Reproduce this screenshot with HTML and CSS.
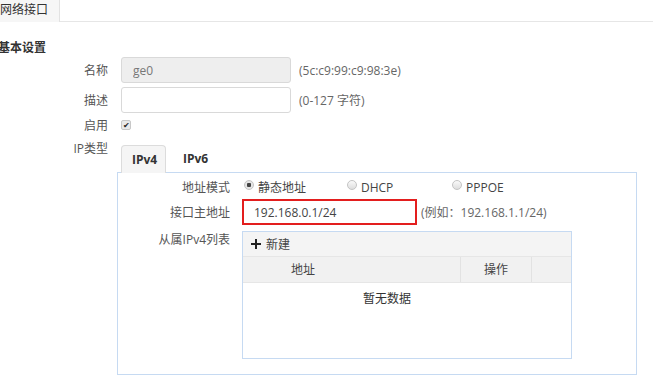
FILE: index.html
```html
<!DOCTYPE html>
<html lang="zh-CN">
	<head>
		<meta charset="utf-8">
		<meta name="viewport" content="width=device-width, initial-scale=1.0">
		<title>网络接口</title>
		<link rel="stylesheet" href="styles.css">
	</head>
	<body>
		<div class="top-tabs">
			<div class="top-tab">网络接口</div>
		</div>
		<h2 class="section-title">基本设置</h2>
		<div class="form">
			<div class="row row-input">
				<label class="label">名称</label>
				<input type="text" class="field field-disabled" value="ge0" readonly>
				<span class="hint">(5c:c9:99:c9:98:3e)</span>
			</div>
			<div class="row row-input">
				<label class="label">描述</label>
				<input type="text" class="field">
				<span class="hint">(0-127 字符)</span>
			</div>
			<div class="row row-check">
				<label class="label">启用</label>
				<span class="check">&#10004;</span>
			</div>
			<div class="row row-type">
				<label class="label label-top">IP类型</label>
				<div class="type-wrap">
					<div class="ip-tabs">
						<div class="ip-tab active">IPv4</div>
						<div class="ip-tab">IPv6</div>
					</div>
					<div class="ip-panel">
						<div class="inner-row inner-mode">
							<label class="inner-label">地址模式</label>
							<div class="radios">
								<span class="radio-item"><span class="radio checked"></span>静态地址</span>
								<span class="radio-item"><span class="radio"></span>DHCP</span>
								<span class="radio-item"><span class="radio"></span>PPPOE</span>
							</div>
						</div>
						<div class="inner-row inner-ip">
							<label class="inner-label">接口主地址</label>
							<input type="text" class="field field-error" value="192.168.0.1/24">
							<span class="hint">(例如：192.168.1.1/24)</span>
						</div>
						<div class="inner-row inner-list">
							<label class="inner-label">从属IPv4列表</label>
							<div class="grid-box">
								<div class="toolbar">
									<svg class="plus" width="10" height="10" viewBox="0 0 10 10"><path d="M4 0h2v4h4v2H6v4H4V6H0V4h4z" fill="#222"/></svg>
									<span>新建</span>
								</div>
								<div class="grid-head">
									<div class="col col-addr">地址</div>
									<div class="col col-op">操作</div>
									<div class="col col-pad"></div>
								</div>
								<div class="grid-empty">暂无数据</div>
							</div>
						</div>
					</div>
				</div>
			</div>
		</div>
	</body>
</html>
```

FILE: styles.css
```css
body {
	margin: 0;
	font-family: 'Open Sans', 'Noto Sans CJK SC', sans-serif;
	font-size: 12px;
	color: #444;
	background-color: #fff;
}
.top-tabs {
	display: flex;
	height: 21px;
	border-bottom: 1px solid #e6e6e6;
}
.top-tab {
	width: 59px;
	height: 22px;
	line-height: 20px;
	background-color: #f6f6f6;
	border-right: 1px solid #e2e2e2;
	color: #333;
	font-size: 12px;
}
.section-title {
	margin: 18px 0 1px -2px;
	height: 16px;
	line-height: 16px;
	font-size: 12px;
	font-weight: bold;
	color: #333;
}
.row {
	display: flex;
	align-items: center;
}
.label {
	width: 108px;
	padding-right: 13px;
	text-align: right;
	color: #555;
	flex-shrink: 0;
}
.row-input {
	height: 26px;
	margin-bottom: 4px;
}
.field {
	box-sizing: border-box;
	width: 170px;
	height: 26px;
	padding: 0 11px;
	border: 1px solid #d9d9d9;
	border-radius: 3px;
	font-family: 'Open Sans', 'Noto Sans CJK SC', sans-serif;
	font-size: 12px;
	color: #444;
	background-color: #fff;
	outline: none;
}
.field-disabled {
	background-color: #eeeeee;
	color: #777;
}
.hint {
	margin-left: 8px;
	color: #666;
}
.row-check {
	height: 16px;
}
.check {
	box-sizing: border-box;
	width: 10px;
	height: 10px;
	border: 1px solid #c8c8c8;
	border-radius: 2px;
	background-color: #e9e9e9;
	font-size: 8px;
	line-height: 8px;
	text-align: center;
	color: #222;
}
.row-type {
	align-items: flex-start;
	margin-top: 12px;
}
.label-top {
	line-height: 16px;
	margin-top: -4px;
}
.row-type > .label {
	padding-right: 9px;
}
.type-wrap {
	width: 520px;
}
.ip-tabs {
	display: flex;
	margin-left: 4px;
	height: 28px;
}
.ip-tab {
	box-sizing: border-box;
	height: 28px;
	padding: 0 10px;
	line-height: 28px;
	font-weight: bold;
	color: #333;
	margin-right: 8px;
}
.ip-tab.active {
	width: 45px;
	background-color: #f5f5f5;
	border: 1px solid #dcdcdc;
	border-bottom: none;
	border-radius: 4px 4px 0 0;
	margin-right: 7px;
}
.ip-panel {
	box-sizing: border-box;
	height: 203px;
	margin-top: -1px;
	border: 1px solid #c6daf2;
	padding-top: 3px;
}
.inner-row {
	display: flex;
	align-items: center;
}
.inner-label {
	width: 112px;
	padding-right: 12px;
	text-align: right;
	color: #555;
	flex-shrink: 0;
}
.inner-mode {
	height: 22px;
	margin-bottom: 1px;
}
.radios {
	display: flex;
	color: #444;
}
.radio-item {
	display: flex;
	align-items: center;
}
.radio-item:nth-child(1) {
	width: 103px;
}
.radio-item:nth-child(2) {
	width: 105px;
}
.radio {
	box-sizing: border-box;
	width: 10px;
	height: 10px;
	margin: -4px 4px 0 2px;
	border: 1px solid #c4c4c4;
	border-radius: 50%;
	background: linear-gradient(#fafafa, #dedede);
}
.radio.checked {
	background: radial-gradient(circle, #444 0, #444 2px, #e6e6e6 2.5px);
}
.inner-ip {
	height: 26px;
}
.field-error {
	width: 175px;
	height: 26px;
	border: 2px solid #e31e1e;
	border-radius: 0;
	padding-left: 10px;
}
.inner-ip .hint {
	margin-left: 4px;
}
.inner-list {
	align-items: flex-start;
	margin-top: 6px;
}
.inner-list .inner-label {
	line-height: 16px;
	margin-top: 1px;
}
.grid-box {
	box-sizing: border-box;
	width: 330px;
	height: 128px;
	border: 1px solid #c6daf2;
}
.toolbar {
	display: flex;
	align-items: center;
	height: 24px;
	padding-left: 8px;
	background-color: #f4f4f4;
	color: #444;
}
.plus {
	margin-right: 5px;
}
.grid-head {
	display: flex;
	height: 25px;
	background-color: #f1f1f1;
	border-top: 1px solid #e6e6e6;
	border-bottom: 1px solid #e6e6e6;
}
.col {
	line-height: 25px;
	color: #444;
}
.col-addr {
	width: 169px;
	padding-left: 48px;
	border-right: 1px solid #e2e2e2;
}
.col-op {
	width: 70px;
	text-align: center;
	border-right: 1px solid #e2e2e2;
}
.col-pad {
	flex: 1;
}
.grid-empty {
	width: 288px;
	padding-top: 6px;
	text-align: center;
	color: #333;
}
```
